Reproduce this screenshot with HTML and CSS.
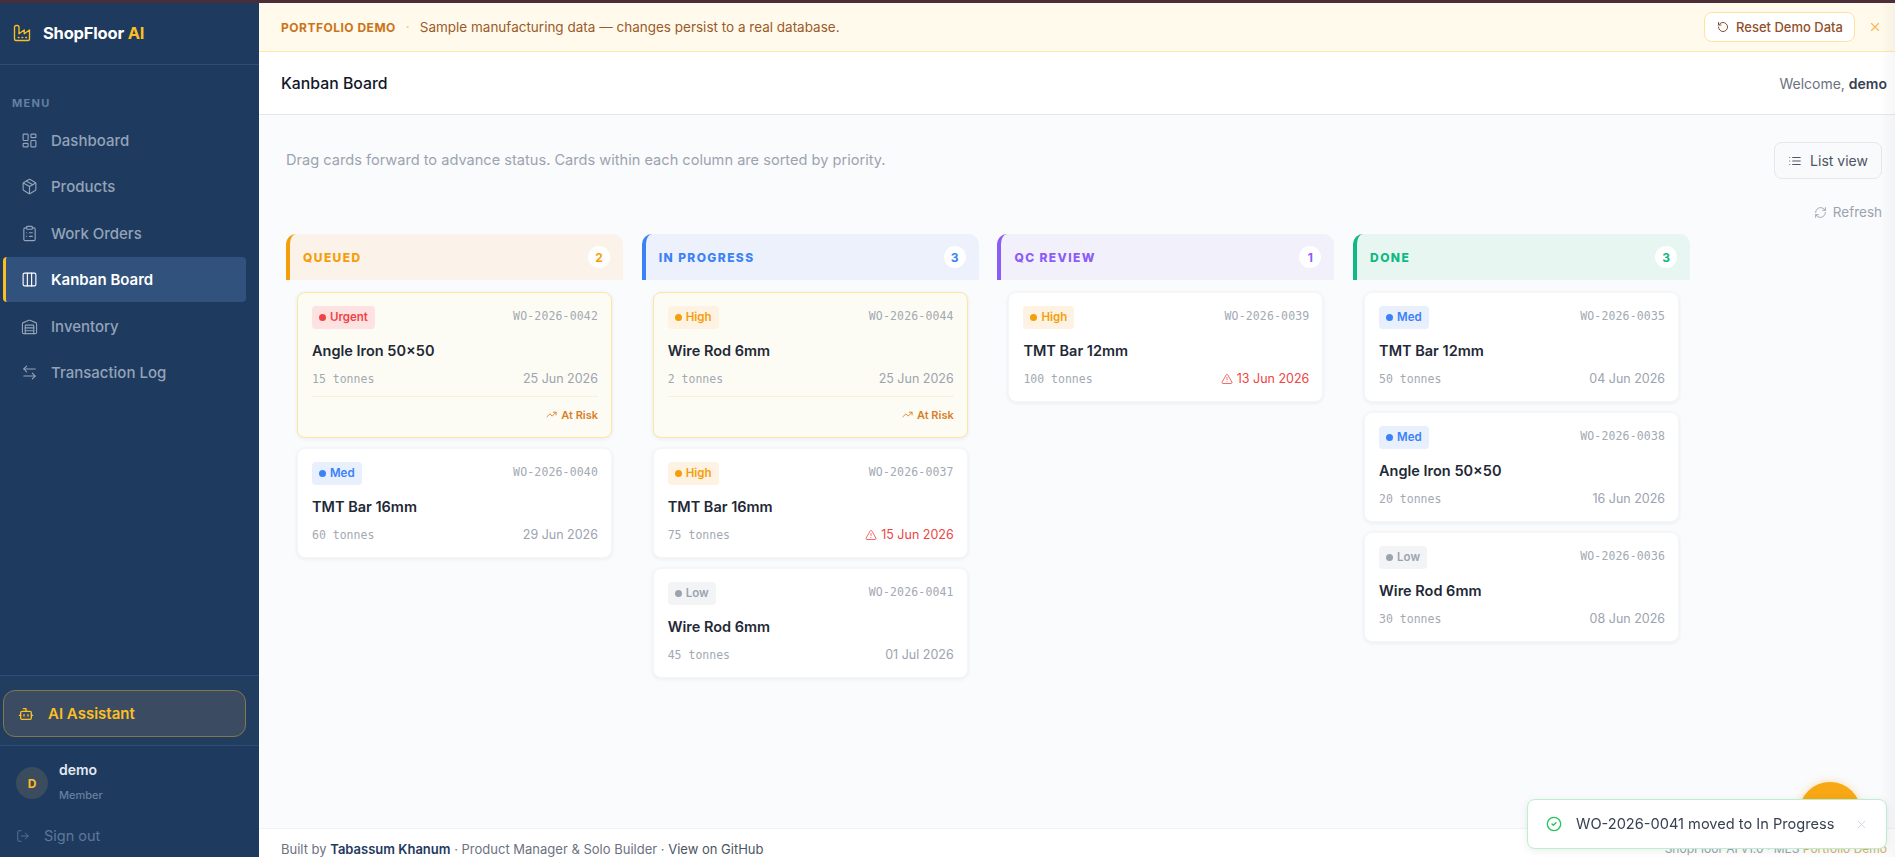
FILE: index.html
```html
<!DOCTYPE html>
<html lang="en">
<head>
  <meta charset="UTF-8" />
  <title>Kanban Board - ShopFloor AI</title>
  <meta name="viewport" content="width=device-width, initial-scale=1.0" />
  <link rel="stylesheet" href="styles.css">
</head>
<body>

  <!-- icon sprite -->
  <svg class="sprite" xmlns="http://www.w3.org/2000/svg">
    <symbol id="i-factory" viewBox="0 0 24 24"><path d="M2 20a2 2 0 0 0 2 2h16a2 2 0 0 0 2-2V8l-7 5V8l-7 5V4a2 2 0 0 0-2-2H4a2 2 0 0 0-2 2Z"/><path d="M17 18h1"/><path d="M12 18h1"/><path d="M7 18h1"/></symbol>
    <symbol id="i-dashboard" viewBox="0 0 24 24"><rect x="3" y="3" width="7" height="9" rx="1"/><rect x="14" y="3" width="7" height="5" rx="1"/><rect x="14" y="12" width="7" height="9" rx="1"/><rect x="3" y="16" width="7" height="5" rx="1"/></symbol>
    <symbol id="i-package" viewBox="0 0 24 24"><path d="M11 21.73a2 2 0 0 0 2 0l7-4A2 2 0 0 0 21 16V8a2 2 0 0 0-1-1.73l-7-4a2 2 0 0 0-2 0l-7 4A2 2 0 0 0 3 8v8a2 2 0 0 0 1 1.73z"/><path d="M12 22V12"/><path d="m3.3 7 8.7 5 8.7-5"/><path d="m7.5 4.27 9 5.15"/></symbol>
    <symbol id="i-clipboard" viewBox="0 0 24 24"><rect x="8" y="2" width="8" height="4" rx="1"/><path d="M16 4h2a2 2 0 0 1 2 2v14a2 2 0 0 1-2 2H6a2 2 0 0 1-2-2V6a2 2 0 0 1 2-2h2"/><path d="M12 11h4"/><path d="M12 16h4"/><path d="M8 11h.01"/><path d="M8 16h.01"/></symbol>
    <symbol id="i-columns" viewBox="0 0 24 24"><rect x="3" y="3" width="18" height="18" rx="2"/><path d="M9 3v18"/><path d="M15 3v18"/></symbol>
    <symbol id="i-warehouse" viewBox="0 0 24 24"><path d="M22 8.35V20a2 2 0 0 1-2 2H4a2 2 0 0 1-2-2V8.35A2 2 0 0 1 3.26 6.5l8-3.2a2 2 0 0 1 1.48 0l8 3.2A2 2 0 0 1 22 8.35Z"/><path d="M6 18h12"/><path d="M6 14h12"/><path d="M6 22V11a1 1 0 0 1 1-1h10a1 1 0 0 1 1 1v11"/></symbol>
    <symbol id="i-swap" viewBox="0 0 24 24"><path d="M8 3 4 7l4 4"/><path d="M4 7h16"/><path d="m16 21 4-4-4-4"/><path d="M20 17H4"/></symbol>
    <symbol id="i-bot" viewBox="0 0 24 24"><path d="M12 8V4H8"/><rect x="4" y="8" width="16" height="12" rx="2"/><path d="M2 14h2"/><path d="M20 14h2"/><path d="M15 13v2"/><path d="M9 13v2"/></symbol>
    <symbol id="i-logout" viewBox="0 0 24 24"><path d="M9 21H5a2 2 0 0 1-2-2V5a2 2 0 0 1 2-2h4"/><path d="m16 17 5-5-5-5"/><path d="M21 12H9"/></symbol>
    <symbol id="i-reset" viewBox="0 0 24 24"><path d="M3 12a9 9 0 1 0 9-9 9.75 9.75 0 0 0-6.74 2.74L3 8"/><path d="M3 3v5h5"/></symbol>
    <symbol id="i-x" viewBox="0 0 24 24"><path d="M18 6 6 18"/><path d="m6 6 12 12"/></symbol>
    <symbol id="i-list" viewBox="0 0 24 24"><path d="M3 12h.01"/><path d="M3 18h.01"/><path d="M3 6h.01"/><path d="M8 12h13"/><path d="M8 18h13"/><path d="M8 6h13"/></symbol>
    <symbol id="i-refresh" viewBox="0 0 24 24"><path d="M3 12a9 9 0 0 1 9-9 9.75 9.75 0 0 1 6.74 2.74L21 8"/><path d="M21 3v5h-5"/><path d="M21 12a9 9 0 0 1-9 9 9.75 9.75 0 0 1-6.74-2.74L3 16"/><path d="M8 16H3v5"/></symbol>
    <symbol id="i-trend" viewBox="0 0 24 24"><path d="M22 7 13.5 15.5 8.5 10.5 2 17"/><path d="M16 7h6v6"/></symbol>
    <symbol id="i-alert" viewBox="0 0 24 24"><path d="m21.73 18-8-14a2 2 0 0 0-3.48 0l-8 14A2 2 0 0 0 4 21h16a2 2 0 0 0 1.73-3"/><path d="M12 9v4"/><path d="M12 17h.01"/></symbol>
    <symbol id="i-check" viewBox="0 0 24 24"><circle cx="12" cy="12" r="10"/><path d="m9 12 2 2 4-4"/></symbol>
  </svg>

  <div class="top-line"></div>

  <div class="app">

    <aside class="sidebar">
      <div class="brand">
        <svg class="icon brand-icon"><use href="#i-factory"/></svg>
        <span>ShopFloor <em>AI</em></span>
      </div>

      <div class="menu-label">MENU</div>

      <nav class="nav">
        <a class="nav-item"><svg class="icon"><use href="#i-dashboard"/></svg>Dashboard</a>
        <a class="nav-item"><svg class="icon"><use href="#i-package"/></svg>Products</a>
        <a class="nav-item"><svg class="icon"><use href="#i-clipboard"/></svg>Work Orders</a>
        <a class="nav-item active"><svg class="icon"><use href="#i-columns"/></svg>Kanban Board</a>
        <a class="nav-item"><svg class="icon"><use href="#i-warehouse"/></svg>Inventory</a>
        <a class="nav-item"><svg class="icon"><use href="#i-swap"/></svg>Transaction Log</a>
      </nav>

      <div class="ai-box">
        <a class="ai-btn"><svg class="icon"><use href="#i-bot"/></svg>AI Assistant</a>
      </div>

      <div class="user">
        <div class="avatar">D</div>
        <div class="user-text">
          <div class="user-name">demo</div>
          <div class="user-role">Member</div>
        </div>
      </div>
      <a class="signout"><svg class="icon"><use href="#i-logout"/></svg>Sign out</a>
    </aside>

    <main class="main">
      <div class="banner">
        <span class="banner-tag">PORTFOLIO DEMO</span>
        <span class="banner-dot">·</span>
        <span class="banner-text">Sample manufacturing data — changes persist to a real database.</span>
        <button class="reset-btn"><svg class="icon"><use href="#i-reset"/></svg>Reset Demo Data</button>
        <svg class="icon banner-close"><use href="#i-x"/></svg>
      </div>

      <header class="page-head">
        <h1>Kanban Board</h1>
        <div class="welcome">Welcome, <b>demo</b></div>
      </header>

      <section class="content">
        <div class="toolbar">
          <p class="hint">Drag cards forward to advance status. Cards within each column are sorted by priority.</p>
          <div class="tools">
            <button class="list-btn"><svg class="icon"><use href="#i-list"/></svg>List view</button>
            <button class="refresh-btn"><svg class="icon"><use href="#i-refresh"/></svg>Refresh</button>
          </div>
        </div>

        <div class="board">

          <div class="col queued">
            <div class="col-head"><span>QUEUED</span><i>2</i></div>
            <div class="card risk">
              <div class="card-top"><span class="badge urgent">Urgent</span><span class="wo">WO-2026-0042</span></div>
              <div class="name">Angle Iron 50×50</div>
              <div class="meta"><span class="qty">15 tonnes</span><span class="date">25 Jun 2026</span></div>
              <div class="risk-row"><svg class="icon"><use href="#i-trend"/></svg>At Risk</div>
            </div>
            <div class="card">
              <div class="card-top"><span class="badge med">Med</span><span class="wo">WO-2026-0040</span></div>
              <div class="name">TMT Bar 16mm</div>
              <div class="meta"><span class="qty">60 tonnes</span><span class="date">29 Jun 2026</span></div>
            </div>
          </div>

          <div class="col progress">
            <div class="col-head"><span>IN PROGRESS</span><i>3</i></div>
            <div class="card risk">
              <div class="card-top"><span class="badge high">High</span><span class="wo">WO-2026-0044</span></div>
              <div class="name">Wire Rod 6mm</div>
              <div class="meta"><span class="qty">2 tonnes</span><span class="date">25 Jun 2026</span></div>
              <div class="risk-row"><svg class="icon"><use href="#i-trend"/></svg>At Risk</div>
            </div>
            <div class="card">
              <div class="card-top"><span class="badge high">High</span><span class="wo">WO-2026-0037</span></div>
              <div class="name">TMT Bar 16mm</div>
              <div class="meta"><span class="qty">75 tonnes</span><span class="date late"><svg class="icon"><use href="#i-alert"/></svg>15 Jun 2026</span></div>
            </div>
            <div class="card">
              <div class="card-top"><span class="badge low">Low</span><span class="wo">WO-2026-0041</span></div>
              <div class="name">Wire Rod 6mm</div>
              <div class="meta"><span class="qty">45 tonnes</span><span class="date">01 Jul 2026</span></div>
            </div>
          </div>

          <div class="col review">
            <div class="col-head"><span>QC REVIEW</span><i>1</i></div>
            <div class="card">
              <div class="card-top"><span class="badge high">High</span><span class="wo">WO-2026-0039</span></div>
              <div class="name">TMT Bar 12mm</div>
              <div class="meta"><span class="qty">100 tonnes</span><span class="date late"><svg class="icon"><use href="#i-alert"/></svg>13 Jun 2026</span></div>
            </div>
          </div>

          <div class="col done">
            <div class="col-head"><span>DONE</span><i>3</i></div>
            <div class="card">
              <div class="card-top"><span class="badge med">Med</span><span class="wo">WO-2026-0035</span></div>
              <div class="name">TMT Bar 12mm</div>
              <div class="meta"><span class="qty">50 tonnes</span><span class="date">04 Jun 2026</span></div>
            </div>
            <div class="card">
              <div class="card-top"><span class="badge med">Med</span><span class="wo">WO-2026-0038</span></div>
              <div class="name">Angle Iron 50×50</div>
              <div class="meta"><span class="qty">20 tonnes</span><span class="date">16 Jun 2026</span></div>
            </div>
            <div class="card">
              <div class="card-top"><span class="badge low">Low</span><span class="wo">WO-2026-0036</span></div>
              <div class="name">Wire Rod 6mm</div>
              <div class="meta"><span class="qty">30 tonnes</span><span class="date">08 Jun 2026</span></div>
            </div>
          </div>

        </div>
      </section>

      <footer class="footer">
        <span>Built by <b>Tabassum Khanum</b> · Product Manager &amp; Solo Builder · <a>View on GitHub</a></span>
        <span class="version">ShopFloor AI v1.0 · MES <em>Portfolio Demo</em></span>
      </footer>
    </main>
  </div>

  <div class="fab"></div>

  <div class="toast">
    <svg class="icon toast-check"><use href="#i-check"/></svg>
    <span>WO-2026-0041 moved to In Progress</span>
    <svg class="icon toast-close"><use href="#i-x"/></svg>
  </div>

  <div class="edge-fade"></div>

</body>
</html>
```

FILE: styles.css
```css
html, body {
  height: 100%;
}

body {
  margin: 0;
  overflow: hidden;
  font-family: 'Inter', 'Liberation Sans', sans-serif;
  color: #1f2937;
  background: #fafbfd;
}

button {
  font-family: inherit;
  cursor: pointer;
}

.sprite {
  display: none;
}

.icon {
  width: 16px;
  height: 16px;
  flex: none;
  fill: none;
  stroke: currentColor;
  stroke-width: 2;
  stroke-linecap: round;
  stroke-linejoin: round;
}

.top-line {
  height: 3px;
  background: #4a2f38;
}

.app {
  display: flex;
  height: 854px;
}

/* sidebar */
.sidebar {
  width: 259px;
  flex: none;
  display: flex;
  flex-direction: column;
  background: #1e3a5f;
  color: #94a3b8;
}

.brand {
  height: 62px;
  box-sizing: border-box;
  display: flex;
  align-items: center;
  gap: 12px;
  padding: 0 0 1px 13px;
  border-bottom: 1px solid #2f4d74;
  font-size: 16.5px;
  font-weight: 700;
  letter-spacing: -0.2px;
  color: #fff;
}

.brand em {
  font-style: normal;
  color: #fbbf24;
}

.brand-icon {
  width: 18px;
  height: 18px;
  color: #fbbf24;
  stroke-width: 1.8;
}

.menu-label {
  margin: 30px 0 7px 12px;
  font-size: 11px;
  font-weight: 700;
  letter-spacing: 1.3px;
  line-height: 16px;
  color: #64809f;
}

.nav {
  display: flex;
  flex-direction: column;
  gap: 1.4px;
  flex: 1;
}

.nav-item {
  margin: 0 13px 0 3px;
  height: 45px;
  display: flex;
  align-items: center;
  gap: 13px;
  padding-left: 18px;
  font-size: 15px;
  font-weight: 500;
  color: #94a3b8;
}

.nav-item .icon {
  width: 17px;
  height: 17px;
  stroke-width: 1.6;
}

.nav-item.active {
  padding-left: 15px;
  border-left: 3px solid #fbbf24;
  border-radius: 4px;
  background: #31527d;
  font-weight: 600;
  color: #fff;
}

.ai-box {
  padding: 14px 13px 8px 3px;
  border-top: 1px solid #2f4d74;
  border-bottom: 1px solid #2f4d74;
  background: #213d60;
}

.ai-btn {
  height: 45px;
  display: flex;
  align-items: center;
  gap: 14px;
  padding-left: 14px;
  border: 1px solid #84764d;
  border-radius: 12px;
  background: #3b4c62;
  font-size: 15px;
  font-weight: 600;
  color: #fbbf24;
}

.user {
  display: flex;
  align-items: center;
  gap: 11px;
  padding: 14px 0 0 16px;
}

.avatar {
  width: 32px;
  height: 32px;
  border-radius: 50%;
  display: flex;
  align-items: center;
  justify-content: center;
  background: #3b4c5e;
  font-size: 12px;
  font-weight: 700;
  color: #fbbf24;
}

.user-text {
  margin-bottom: 4px;
}

.user-name {
  font-size: 14px;
  font-weight: 600;
  line-height: 20px;
  color: #e2e8f0;
}

.user-role {
  margin-top: 8px;
  font-size: 11px;
  font-weight: 500;
  line-height: 14px;
  color: #64809f;
}

.signout {
  display: flex;
  align-items: center;
  gap: 14px;
  padding: 20px 0 11px 16px;
  font-size: 14.5px;
  line-height: 20px;
  color: #5d789a;
}

.signout .icon {
  width: 14px;
  height: 14px;
  stroke-width: 1.5;
}

/* main column */
.main {
  flex: 1;
  min-width: 0;
  display: flex;
  flex-direction: column;
}

.banner {
  height: 49px;
  box-sizing: border-box;
  flex: none;
  display: flex;
  align-items: center;
  padding: 0 13px 0 22px;
  border-bottom: 1px solid #fde9a8;
  background: #fffaec;
  font-size: 13.5px;
}

.banner-tag {
  font-size: 12px;
  font-weight: 700;
  letter-spacing: 0.5px;
  color: #c9741a;
}

.banner-dot {
  margin: 0 10px;
  color: #f3c56b;
}

.banner-text {
  color: #9a5a2a;
}

.reset-btn {
  margin-left: auto;
  height: 30px;
  padding: 0 11px 0 12px;
  display: flex;
  align-items: center;
  gap: 7px;
  border: 1px solid #fde3a2;
  border-radius: 8px;
  background: #fff;
  font-size: 13px;
  font-weight: 500;
  color: #92502a;
}

.reset-btn .icon {
  width: 12px;
  height: 12px;
  color: #7c5030;
}

.banner-close {
  margin-left: 13px;
  width: 14px;
  height: 14px;
  color: #f6b756;
}

.page-head {
  height: 63px;
  box-sizing: border-box;
  flex: none;
  display: flex;
  align-items: center;
  justify-content: space-between;
  padding: 0 8px 0 22px;
  border-bottom: 1px solid #e5e7eb;
  background: #fff;
}

h1 {
  margin: 0;
  font-size: 15.8px;
  font-weight: 500;
  color: #111827;
}

.welcome {
  font-size: 14px;
  color: #6b7280;
}

.welcome b {
  font-weight: 600;
  color: #374151;
}

.content {
  height: 713px;
  box-sizing: border-box;
  flex: none;
  padding: 27px 13px 0 27px;
}

.toolbar {
  display: flex;
  justify-content: space-between;
  align-items: flex-start;
  margin-bottom: 13px;
}

.hint {
  margin: 8px 0 0;
  font-size: 14.6px;
  line-height: 20px;
  color: #9ca3af;
}

.tools {
  display: flex;
  flex-direction: column;
  align-items: flex-end;
  gap: 24px;
}

.list-btn {
  height: 37px;
  width: 108px;
  display: flex;
  align-items: center;
  justify-content: center;
  gap: 8px;
  border: 1px solid #e5e7eb;
  border-radius: 8px;
  background: #f9fafb;
  font-size: 14px;
  color: #4b5563;
}

.list-btn .icon {
  width: 14px;
  height: 14px;
  stroke-width: 1.7;
}

.refresh-btn {
  height: 18px;
  padding: 0;
  display: flex;
  align-items: center;
  gap: 6px;
  border: 0;
  background: none;
  font-size: 13.5px;
  color: #9ca3af;
}

.refresh-btn .icon {
  width: 13px;
  height: 13px;
  stroke-width: 1.7;
}

/* board */
.board {
  display: flex;
  align-items: flex-start;
  gap: 18.7px;
}

.col {
  width: 337px;
  flex: none;
  display: flex;
  flex-direction: column;
  gap: 10px;
}

.col-head {
  height: 46px;
  box-sizing: border-box;
  display: flex;
  align-items: center;
  justify-content: space-between;
  margin-bottom: 1.5px;
  padding: 0 13px 0 13px;
  border-left: 4px solid;
  border-radius: 10px 10px 0 0;
  font-size: 12px;
  font-weight: 800;
  letter-spacing: 1.4px;
}

.col-head i {
  width: 22px;
  height: 22px;
  border-radius: 50%;
  display: flex;
  align-items: center;
  justify-content: center;
  background: #fff;
  font-style: normal;
  font-weight: 700;
  letter-spacing: 0;
}

.queued .col-head {
  background: #fbf3ea;
  border-color: #f59e0b;
  color: #f59e0b;
}

.progress .col-head {
  background: #ecf1fc;
  border-color: #3b82f6;
  color: #3b82f6;
}

.review .col-head {
  background: #f2f0fb;
  border-color: #8b5cf6;
  color: #8b5cf6;
}

.done .col-head {
  background: #e8f6f1;
  border-color: #10b981;
  color: #10b981;
}

.card {
  margin: 0 11px;
  padding: 13px 13px 13px 14px;
  border: 1px solid #f5f6f8;
  border-radius: 8px;
  background: #fff;
  box-shadow: 0 1px 4px rgba(15, 23, 42, 0.07);
}

.card.risk {
  border-color: #fbe6a2;
  background: #fdfcf4;
}

.card-top {
  display: flex;
  justify-content: space-between;
  align-items: flex-start;
}

.badge {
  height: 23px;
  display: flex;
  align-items: center;
  gap: 4px;
  padding: 0 7px;
  border-radius: 4px;
  font-size: 11.5px;
  font-weight: 600;
}

.badge::before {
  content: '';
  width: 7px;
  height: 7px;
  border-radius: 50%;
  background: currentColor;
}

.urgent {
  background: #fee2e2;
  color: #ef4444;
}

.high {
  background: #fef3e2;
  color: #f59e0b;
}

.med {
  background: #e8f0fe;
  color: #3b82f6;
}

.low {
  background: #f3f4f6;
  color: #9ca3af;
}

.wo {
  margin-top: 3px;
  font-family: 'DejaVu Sans Mono', 'Liberation Mono', monospace;
  font-size: 11.5px;
  line-height: 14px;
  letter-spacing: 0.15px;
  color: #a3a9b3;
}

.name {
  margin-top: 12px;
  font-size: 14.5px;
  font-weight: 600;
  line-height: 20px;
  color: #1f2937;
}

.meta {
  display: flex;
  justify-content: space-between;
  align-items: center;
  margin-top: 9px;
  line-height: 18px;
}

.qty {
  font-family: 'DejaVu Sans Mono', 'Liberation Mono', monospace;
  font-size: 11.5px;
  color: #a3a9b3;
}

.date {
  display: flex;
  align-items: center;
  gap: 4px;
  font-size: 12.5px;
  color: #9ca3af;
}

.date.late {
  color: #ef4444;
}

.date .icon {
  width: 12px;
  height: 12px;
  stroke-width: 1.6;
}

.risk-row {
  display: flex;
  align-items: center;
  justify-content: flex-end;
  gap: 4px;
  margin-top: 8px;
  padding-top: 9px;
  border-top: 1px solid #f8f0d8;
  font-size: 11px;
  font-weight: 600;
  line-height: 18px;
  color: #d97f2a;
}

.risk-row .icon {
  width: 11px;
  height: 11px;
}

/* footer runs past the bottom of the window */
.footer {
  display: flex;
  justify-content: space-between;
  padding: 11px 8px 0 22px;
  border-top: 1px solid #f1f3f6;
  background: #fff;
  font-size: 13px;
  line-height: 18px;
  color: #6b7280;
}

.footer b {
  font-weight: 600;
  color: #1e3a5f;
}

.footer a {
  color: #4b5563;
}

.version {
  font-size: 12px;
  color: #9ca3af;
}

.version em {
  font-style: normal;
  color: #d9b36a;
}

/* floating bits */
.fab {
  position: fixed;
  left: 1799px;
  top: 782px;
  width: 62px;
  height: 62px;
  border-radius: 50%;
  background: #f8a814;
  box-shadow: 0 0 8px rgba(245, 158, 11, 0.35);
}

.toast {
  position: fixed;
  left: 1527px;
  top: 799px;
  width: 360px;
  height: 50px;
  box-sizing: border-box;
  display: flex;
  align-items: center;
  padding: 0 18px;
  border: 1px solid #bbf0cf;
  border-radius: 8px;
  background: #fff;
  box-shadow: 0 2px 8px rgba(15, 23, 42, 0.08);
  font-size: 14.6px;
  color: #374151;
}

.toast-check {
  color: #22c55e;
  margin-right: 14px;
}

.toast-close {
  margin-left: auto;
  width: 13px;
  height: 13px;
  stroke-width: 1.6;
  color: #cbd5e1;
}

.edge-fade {
  position: fixed;
  top: 3px;
  right: 0;
  bottom: 0;
  width: 16px;
  background: linear-gradient(to right, rgba(120, 120, 120, 0), rgba(120, 120, 120, 0.06));
  pointer-events: none;
}
```
